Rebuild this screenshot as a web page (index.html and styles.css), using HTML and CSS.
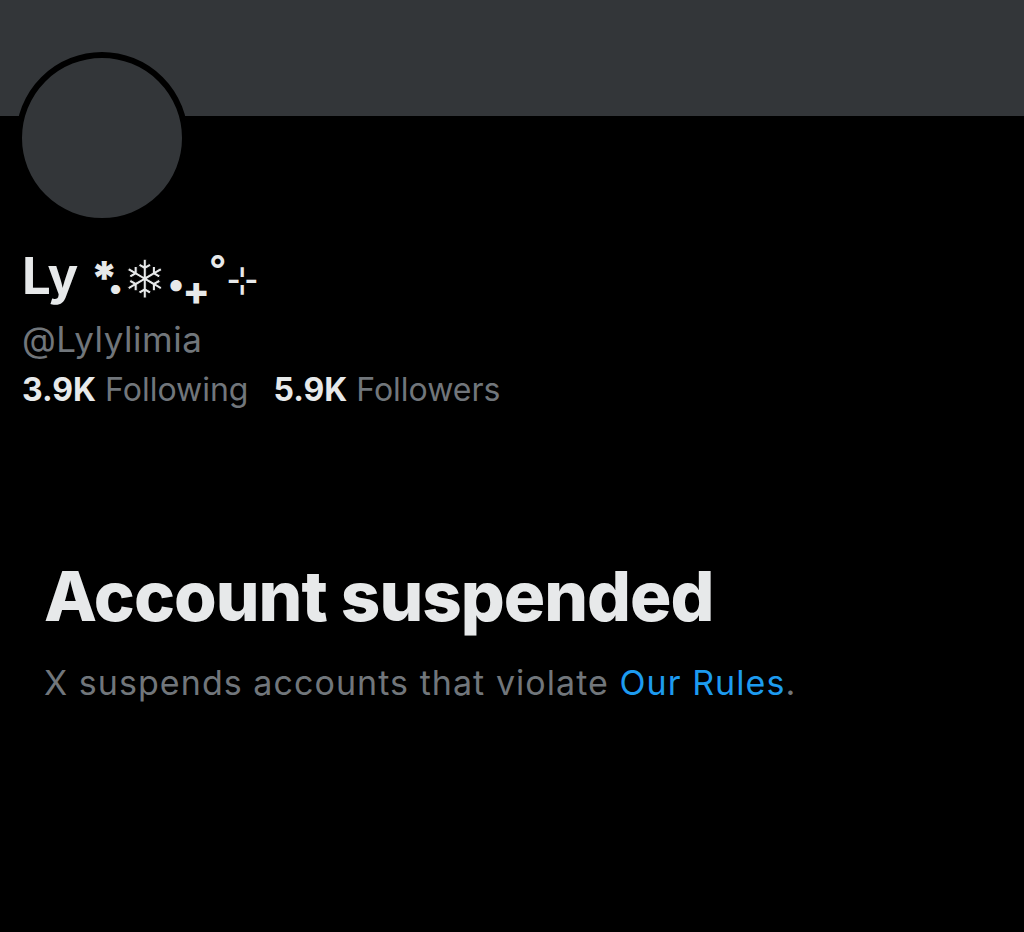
FILE: index.html
```html
<!DOCTYPE html>
<html lang="en">
<head>
<meta charset="utf-8">
<title>Account suspended</title>
<link rel="stylesheet" href="styles.css">
</head>
<body>
<div class="banner"></div>
<div class="profile">
  <div class="avatar"></div>
  <div class="name">Ly <span class="d ast">*.</span><span class="d snow">❄&#xFE0E;</span><span class="d mid">•</span><span class="d plus">+</span><span class="d ring">°</span><span class="d cross">⊹</span></div>
  <div class="handle">@Lylylimia</div>
  <div class="stats">
    <span class="stat"><b>3.9K</b> Following</span>
    <span class="stat"><b>5.9K</b> Followers</span>
  </div>
</div>
<div class="notice">
  <h1 class="title">Account suspended</h1>
  <p class="desc">X suspends accounts that violate <a class="link" href="#">Our Rules</a>.</p>
</div>
</body>
</html>
```
FILE: styles.css
```css
html, body {
  margin: 0;
  padding: 0;
  background: #000;
  height: 100%;
}
body {
  font-family: Inter, "Noto Sans", "DejaVu Sans", sans-serif;
  color: #e7e9ea;
}
.banner {
  height: 116px;
  background: #333639;
}
.profile {
  padding: 0 22px;
}
.avatar {
  width: 160px;
  height: 160px;
  border: 6px solid #000;
  border-radius: 50%;
  background: #333639;
  margin-top: -64px;
  margin-left: -6px;
}
.name {
  margin-top: 22px;
  height: 60px;
  font-size: 51px;
  line-height: 60px;
  font-weight: 700;
  color: #e7e9ea;
  white-space: nowrap;
}
.d {
  display: inline-block;
  line-height: 0;
  color: #e7e9ea;
}
.ast {
  font-size: 46px;
  font-weight: 900;
  letter-spacing: -5px;
  vertical-align: 0;
}
.snow {
  font-family: "DejaVu Sans", sans-serif;
  font-weight: 400;
  font-size: 53px;
  -webkit-text-stroke: 1px #000;
  vertical-align: -4px;
  margin-left: 4px;
}
.mid {
  font-size: 36px;
  vertical-align: -2px;
  margin-left: 0;
}
.plus {
  font-size: 40px;
  font-weight: 800;
  vertical-align: -11px;
  margin-left: -2px;
}
.ring {
  font-size: 38px;
  font-weight: 600;
  vertical-align: 11px;
  margin-left: -1px;
}
.cross {
  font-family: "DejaVu Sans", sans-serif;
  font-weight: 400;
  font-size: 38px;
  vertical-align: 1px;
  margin-left: 0;
}
.handle {
  margin-top: 13px;
  font-size: 35px;
  line-height: 40px;
  letter-spacing: 0.5px;
  color: #71767b;
}
.stats {
  display: flex;
  gap: 25px;
  font-size: 32px;
  line-height: 40px;
  color: #71767b;
  margin-top: 11px;
}
.stats b {
  color: #e7e9ea;
  font-weight: 700;
}
.notice {
  padding: 0 44px;
  margin-top: 146px;
}
.title {
  margin: 0;
  font-size: 69px;
  line-height: 80px;
  font-weight: 800;
  color: #e7e9ea;
  letter-spacing: -1px;
}
.desc {
  margin: 25px 0 0;
  font-size: 34px;
  line-height: 44px;
  letter-spacing: 1.05px;
  color: #71767b;
}
.link {
  color: #1d9bf0;
  text-decoration: none;
}
```
